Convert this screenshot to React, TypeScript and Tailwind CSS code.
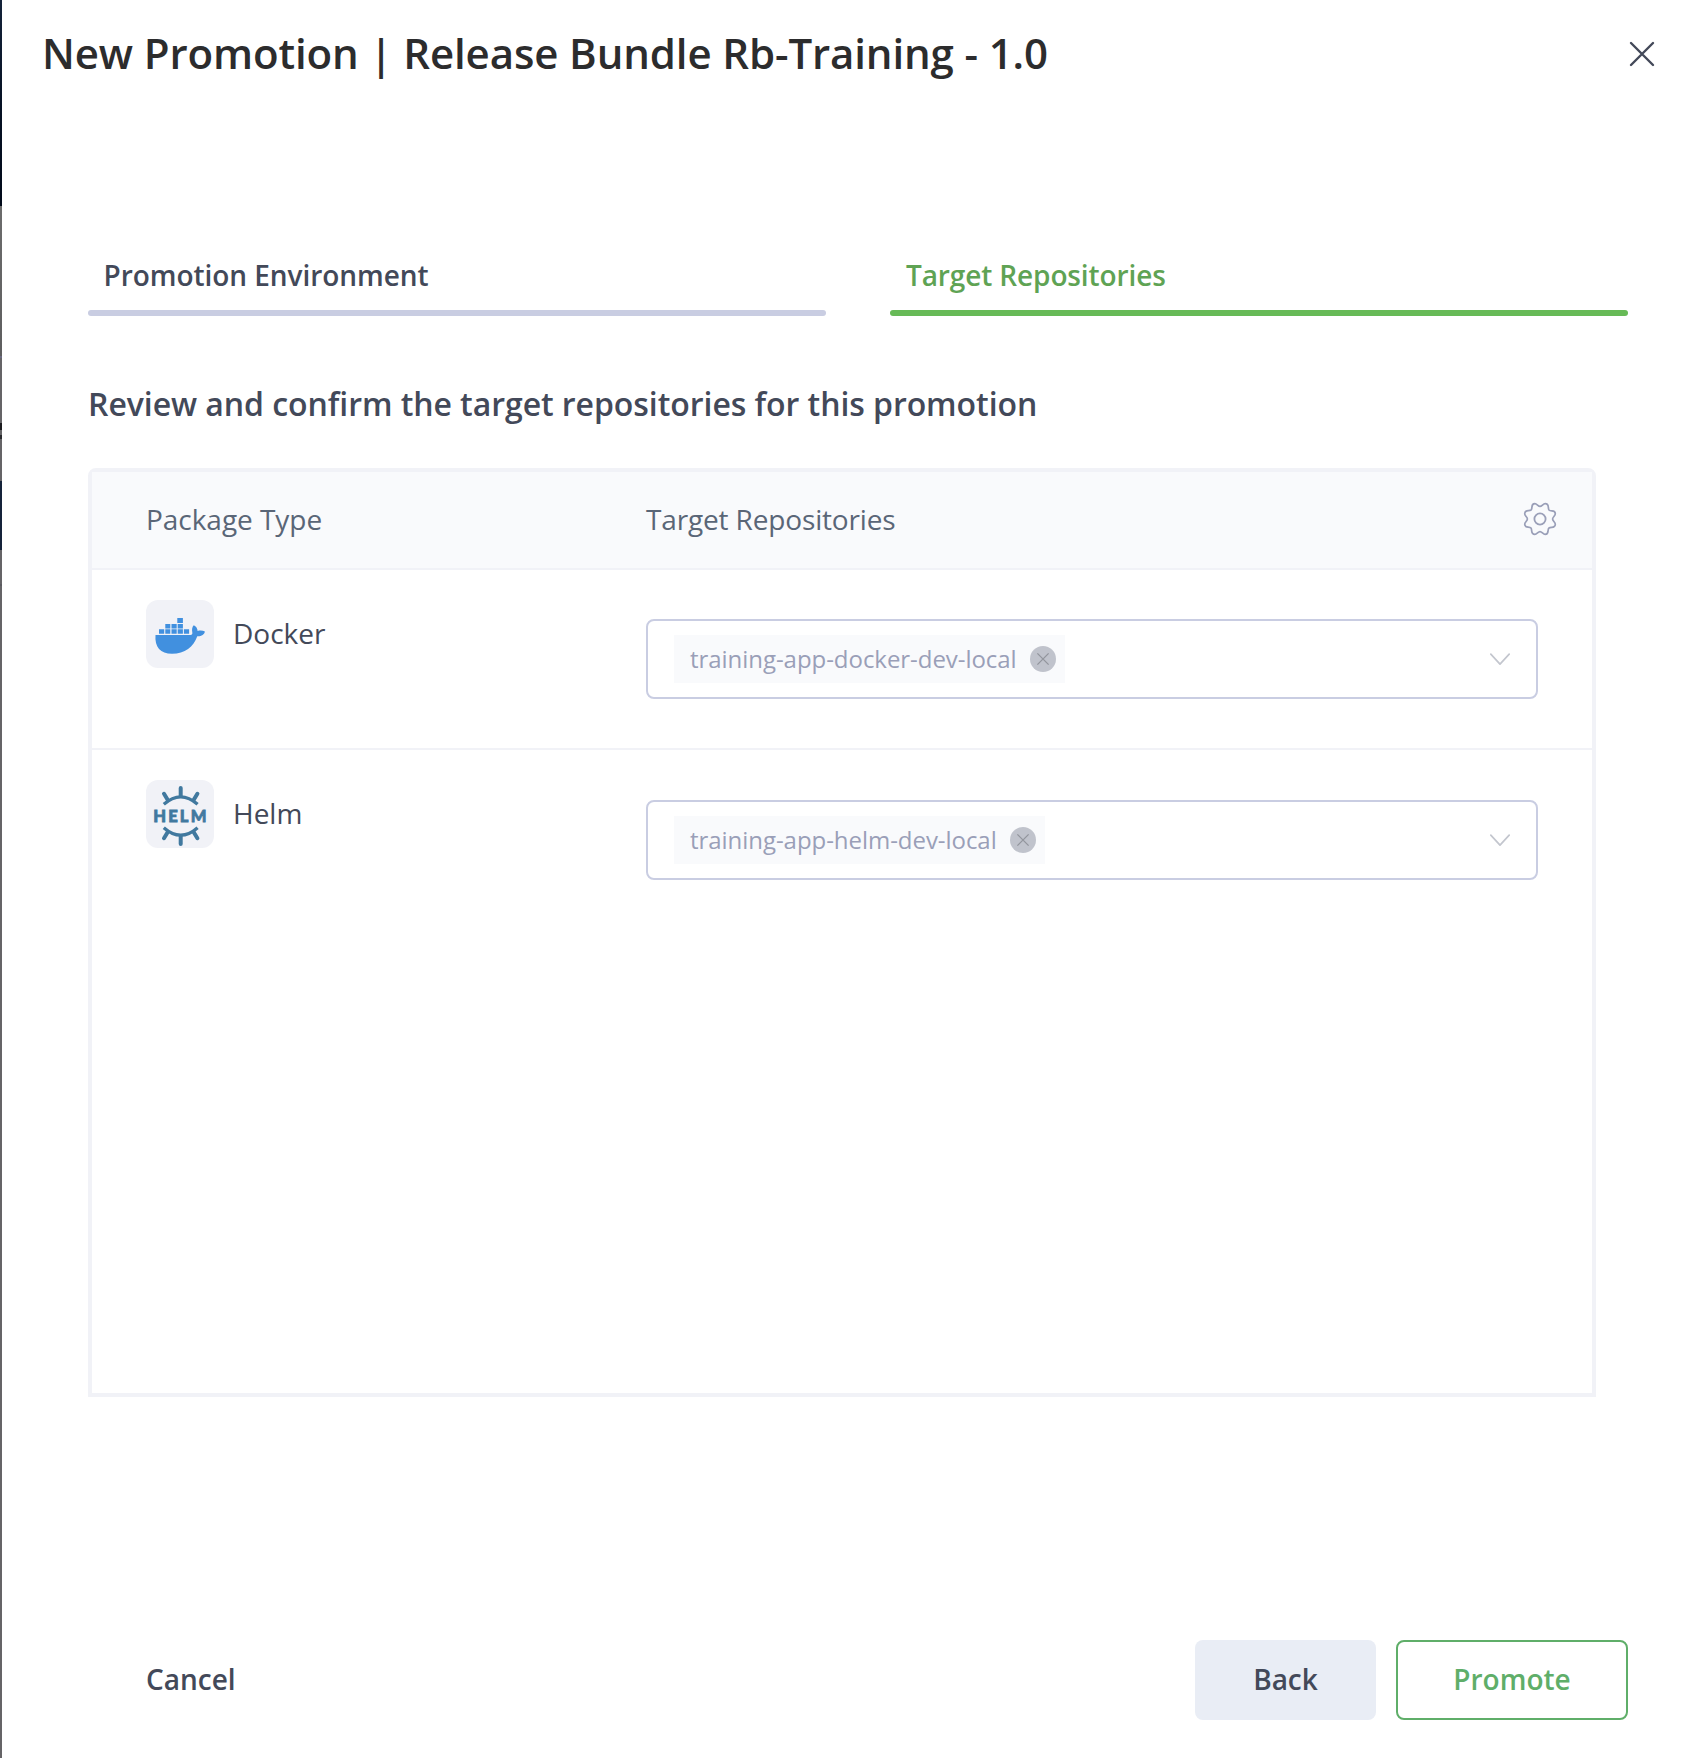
import React from "react";

function CloseIcon() {
  return (
    <svg width="26" height="26" viewBox="0 0 26 26" fill="none" stroke="#434959" strokeWidth="2.4" strokeLinecap="round">
      <path d="M2 2 24 24M24 2 2 24" />
    </svg>
  );
}

function GearIcon() {
  return (
    <svg width="34" height="34" viewBox="-17 -17 34 34" fill="none" stroke="#9a9fb8" strokeWidth="1.7" strokeLinejoin="round">
      <circle r="5.6" strokeWidth="1.8" />
      <path d="M0 -12.6C2 -12.6 3 -15.3 5.2 -15.3C9.6 -15.3 7.6 -11 9 -9C10.6 -7 15.3 -9.6 15.3 -5.2C15.3 -3 12.6 -2 12.6 0C12.6 2 15.3 3 15.3 5.2C15.3 9.6 11 7.6 9 9C7 10.6 9.6 15.3 5.2 15.3C3 15.3 2 12.6 0 12.6C-2 12.6 -3 15.3 -5.2 15.3C-9.6 15.3 -7.6 11 -9 9C-10.6 7 -15.3 9.6 -15.3 5.2C-15.3 3 -12.6 2 -12.6 0C-12.6 -2 -15.3 -3 -15.3 -5.2C-15.3 -9.6 -11 -7.6 -9 -9C-7 -10.6 -9.6 -15.3 -5.2 -15.3C-3 -15.3 -2 -12.6 0 -12.6Z" />
    </svg>
  );
}

function DockerIcon() {
  return (
    <svg width="68" height="68" viewBox="0 0 68 68" fill="#4190df">
      <path d="M31.3 18h5.6v5h-5.6zM19.3 24h5v4.5h-5zM25.5 24h5.2v4.5h-5.2zM31.7 24h5.2v4.5h-5.2zM13 29.3h5.2v4.5H13zM19.3 29.3h5v4.5h-5zM25.5 29.3h5.2v4.5h-5.2zM31.7 29.3h5.2v4.5h-5.2zM37.9 29.3h5.2v4.5h-5.2z" />
      <path d="M9.5 35H44.5C46 35 46.6 34 46.3 32.5C45.7 29.5 46.2 26.5 47.8 25.2C50 26.3 51.6 28.5 51.6 31C54 30.3 57 30.5 58.9 31.5C58.5 34.8 55 36.6 51.3 36.3C47.5 47 39 53.8 26 53.8C14.5 53.8 8.5 47 9.5 35Z" />
    </svg>
  );
}

function HalfWheel() {
  return (
    <g>
      <path d="M17.8 24.3Q34.7 9.3 51.6 24.3" strokeWidth="3.2" />
      <path d="M34.7 8V16M18 13.8 21.8 20M51.4 13.8 47.6 20" strokeWidth="4" strokeLinecap="round" />
    </g>
  );
}

function HelmIcon() {
  return (
    <svg width="68" height="68" viewBox="0 0 68 68" fill="none" stroke="#41799f">
      <HalfWheel />
      <g transform="matrix(1 0 0 -1 0 72)">
        <HalfWheel />
      </g>
      <text x="7.6 23.8 36 47.6" y="42.4" fontSize="17.6" fill="#41799f" strokeWidth="0.8" transform="matrix(.94 0 0 1 0 0)" className="font-['Lato',sans-serif] font-black">
        HELM
      </text>
    </svg>
  );
}

function Select({ value }: { value: string }) {
  return (
    <div className="flex h-20 w-[892px] items-center justify-between rounded-[8px] border-2 border-[#c9cde2] bg-white px-[26px]">
      <div className="flex h-12 items-center bg-[#f9fafc] pl-4 pr-[9px]">
        <span className="whitespace-nowrap text-[24px] leading-none tracking-[-0.045px] text-[#9a9fb8]">{value}</span>
        <svg className="ml-[13px]" width="26" height="26" viewBox="0 0 26 26">
          <circle cx="13" cy="13" r="13" fill="#c0c3cc" />
          <path d="M7.4 7.4 18.6 18.6M18.6 7.4 7.4 18.6" stroke="#92959d" strokeWidth="1.3" />
        </svg>
      </div>
      <svg width="20" height="12" viewBox="0 0 20 12" fill="none" stroke="#c3c6ce" strokeWidth="1.7" strokeLinecap="round" strokeLinejoin="round">
        <path d="M.8 1.2 10 11.1 19.2 1.2" />
      </svg>
    </div>
  );
}

function Row({ icon, name, repo, last = false }: { icon: React.ReactNode; name: string; repo: string; last?: boolean }) {
  return (
    <div className={last ? "flex items-start pl-[54px]" : "flex h-[180px] items-start border-b-2 border-[#f1f2f7] pl-[54px]"}>
      <div className="flex w-[500px] items-center pt-[30px]">
        <div className="h-[68px] w-[68px] rounded-[12px] bg-[#f1f2f7]">{icon}</div>
        <span className="ml-[19px] pb-[2px] text-[28px] leading-none text-[#434959]">{name}</span>
      </div>
      <div className={last ? "pt-[50px]" : "pt-[49px]"}>
        <Select value={repo} />
      </div>
    </div>
  );
}

function Tab({ label, active = false }: { label: string; active?: boolean }) {
  return (
    <div className="flex-1">
      <div className={active ? "pl-4 text-[28px] font-semibold leading-[38px] tracking-[-0.12px] text-[#5fa354]" : "pl-[15.5px] text-[28px] font-semibold leading-[38px] tracking-[-0.05px] text-[#434959]"}>
        {label}
      </div>
      <div className={active ? "mt-4 h-[6px] rounded-[3px] bg-[#67ba57]" : "mt-4 h-[6px] rounded-[3px] bg-[#c9cde2]"} />
    </div>
  );
}

function PageEdge() {
  return (
    <div className="flex w-[2px] shrink-0 flex-col bg-[#656467]">
      <div className="h-[206px] bg-gradient-to-b from-[#14233a] via-[#071225] to-[#020a1a]" />
      <div className="h-[150px] bg-gradient-to-b from-[#6c6c6c] to-[#5e5e5f]" />
      <div className="h-[2px] bg-[#6a6880]" />
      <div className="h-[65px]" />
      <div className="h-[7px] bg-[#1b1b1f]" />
      <div className="h-[5px]" />
      <div className="h-[4px] bg-[#2a2a2e]" />
      <div className="h-[42px]" />
      <div className="h-[69px] bg-[#15233a]" />
      <div className="h-[34px]" />
      <div className="h-[2px] bg-[#5b5b60]" />
    </div>
  );
}

export default function App() {
  return (
    <div className="flex h-[1758px] w-[1682px] overflow-hidden bg-white font-['Open_Sans',sans-serif]">
      <PageEdge />
      <main className="flex flex-1 flex-col">
        <header className="flex h-[108px] items-center justify-between pl-[40px] pr-[27px]">
          <h1 className="pb-[2px] text-[42px] font-semibold leading-none tracking-[-0.12px] text-[#2c2c2d]">New Promotion | Release Bundle Rb-Training - 1.0</h1>
          <CloseIcon />
        </header>

        <nav className="ml-[86px] mr-[54px] mt-[148px] flex gap-16">
          <Tab label="Promotion Environment" />
          <Tab label="Target Repositories" active />
        </nav>

        <h2 className="ml-[86px] mt-[66px] text-[32px] font-semibold leading-[44px] tracking-[-0.06px] text-[#434959]">
          Review and confirm the target repositories for this promotion
        </h2>

        <section className="ml-[86px] mt-[42px] h-[929px] w-[1508px] rounded-t-[8px] border-4 border-[#f1f2f7]">
          <div className="flex h-[98px] items-center border-b-2 border-[#f1f2f7] bg-[#f9fafc] pl-[54px] pr-[35px] text-[28px] text-[#5a6677]">
            <span className="w-[500px] pb-[2px] leading-none tracking-[-0.04px]">Package Type</span>
            <span className="flex-1 pb-[2px] leading-none tracking-[-0.15px]">Target Repositories</span>
            <span className="pb-[2px]"><GearIcon /></span>
          </div>
          <Row icon={<DockerIcon />} name="Docker" repo="training-app-docker-dev-local" />
          <Row icon={<HelmIcon />} name="Helm" repo="training-app-helm-dev-local" last />
        </section>

        <footer className="mt-[243px] flex h-20 items-center pl-[144px] pr-[54px] text-[28px] font-semibold leading-none">
          <button className="pb-[2px] text-[#434959]">Cancel</button>
          <button className="ml-auto h-20 w-[181px] rounded-[8px] bg-[#e9edf5] pb-[2px] text-[#434959]">Back</button>
          <button className="ml-5 h-20 w-[232px] rounded-[8px] border-2 border-[#5fae69] pb-[2px] text-[#5fae69]">Promote</button>
        </footer>
      </main>
    </div>
  );
}
